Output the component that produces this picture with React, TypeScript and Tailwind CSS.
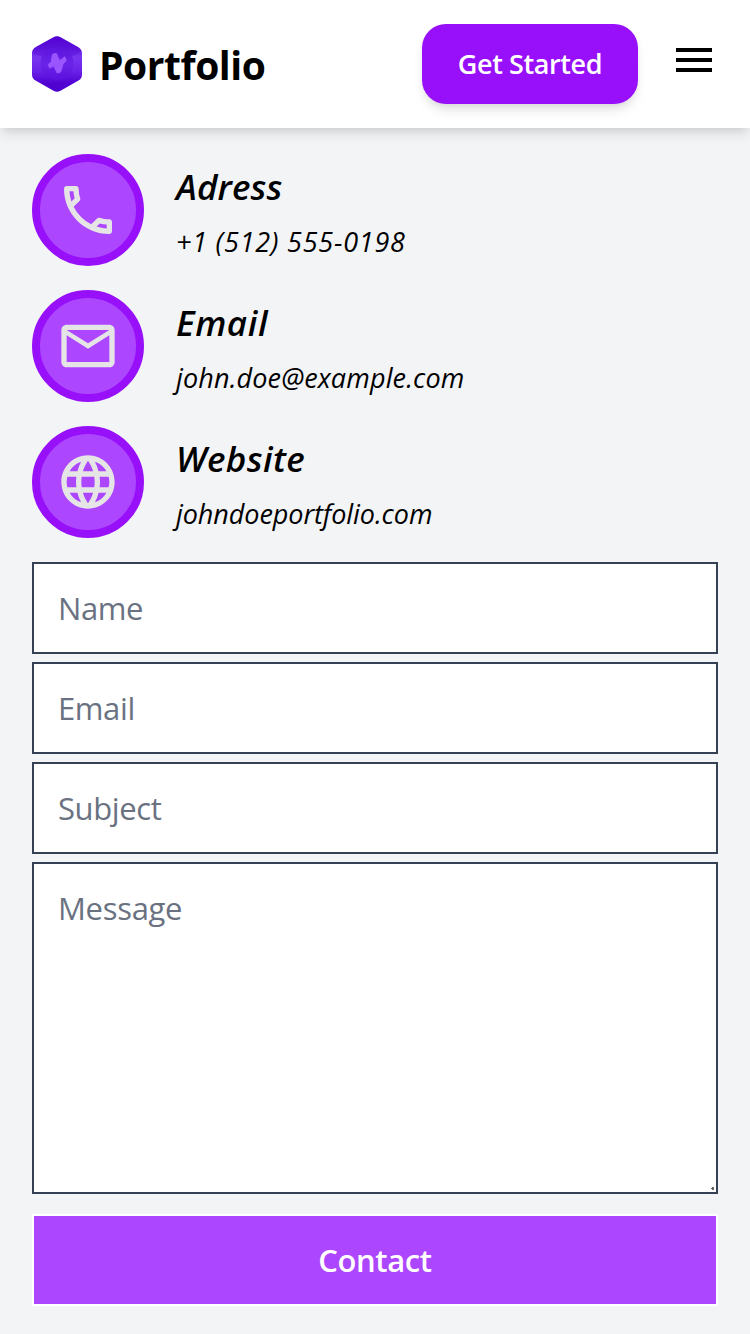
import { MdLanguage, MdMailOutline, MdMenu, MdOutlinePhone } from "react-icons/md";

const contacts = [
  { title: "Adress", value: "+1 (512) 555-0198", Icon: MdOutlinePhone, titleClass: "tracking-[0.1px]", valueClass: "tracking-[0.75px]" },
  { title: "Email", value: "john.doe@example.com", Icon: MdMailOutline, titleClass: "tracking-[0.6px]", valueClass: "tracking-[0.13px]" },
  { title: "Website", value: "johndoeportfolio.com", Icon: MdLanguage, titleClass: "tracking-[0.4px]", valueClass: "tracking-[-0.08px]" },
];

const fields = ["Name", "Email", "Subject"];

function Logo() {
  return (
    <svg width="50" height="56" viewBox="0 0 50 56" className="shrink-0">
      <defs>
        <linearGradient id="hex" x1="0" y1="0" x2="0" y2="1">
          <stop offset="0" stopColor="#5300d4" />
          <stop offset="0.2" stopColor="#6018de" />
          <stop offset="0.38" stopColor="#7835f0" />
          <stop offset="0.62" stopColor="#6c22e9" />
          <stop offset="0.85" stopColor="#5002d2" />
          <stop offset="1" stopColor="#4d00cc" />
        </linearGradient>
        <linearGradient id="disc" x1="0" y1="0" x2="0" y2="1">
          <stop offset="0" stopColor="#5c12dc" />
          <stop offset="0.5" stopColor="#6a24e8" />
          <stop offset="1" stopColor="#5c10dd" />
        </linearGradient>
      </defs>
      <path d="M21.5 1.2Q25 -.8 28.5 1.2L46 11Q50 13.200 50 17.500V38.500Q50 42.500 46.500 44.500L28.500 54.800Q25 56.800 21.500 54.800L3.500 44.500Q0 42.500 0 38.500V17.500Q0 13.200 3.800 11Z" fill="url(#hex)" />
      <path d="M0 17Q0 13 3.800 11L21.500 1.200Q25 -.8 28.500 1.200L46 11Q49 12.800 49.700 15.500L39 21Q25 7 11 21Z" fill="#5200d2" opacity=".3" />
      <circle cx="25" cy="27.500" r="16.500" fill="url(#disc)" />
      <path d="M16.300 28.500L19.300 26L20.200 19.500Q20.500 18 22 17.800L24.500 17.500L27.300 24.500L29.500 23.500L32.800 20.800L34.200 24.500L31 28L29 35Q28.700 36.500 27 36.600L25 36.800L21.800 29.800L17.800 32.200Z" fill="#9b55ff" stroke="#9b55ff" strokeWidth="1" strokeLinejoin="round" />
    </svg>
  );
}

export default function App() {
  return (
    <div className="flex min-h-[1334px] flex-col bg-gray-100 font-['Open_Sans','Noto_Sans',sans-serif] text-black">
      <header className="relative flex h-32 items-center justify-between bg-white px-8 shadow-[0_8px_12px_-2px_rgba(0,0,0,0.1),0_4px_8px_-4px_rgba(0,0,0,0.1)]">
        <div className="flex items-center gap-[17px]">
          <Logo />
          <span className="pt-[2px] text-[39px] leading-[56px] font-bold tracking-[-0.45px]">Portfolio</span>
        </div>
        <div className="flex items-center gap-8">
          <button className="h-20 w-[216px] rounded-3xl bg-[#9810fa] text-[27px] font-semibold tracking-[-0.4px] text-white shadow-[0_8px_12px_-2px_rgba(0,0,0,0.1),0_4px_8px_-4px_rgba(0,0,0,0.1)]">
            Get Started
          </button>
          <MdMenu className="mb-2 size-12" />
        </div>
      </header>

      <main className="flex flex-col px-8 pt-[26px]">
        <div className="flex flex-col gap-6">
          {contacts.map(({ title, value, Icon, titleClass, valueClass }) => (
            <div key={title} className="flex h-28 items-center gap-8">
              <div className="flex size-28 items-center justify-center rounded-full border-8 border-[#9810fa] bg-[#ad46ff] text-[#e5e5e5]">
                <Icon className="size-16" />
              </div>
              <div className="flex flex-col gap-[3px] pt-[5px] italic">
                <h2 className={`text-[35px] leading-[56px] font-semibold ${titleClass}`}>{title}</h2>
                <p className={`text-[27px] leading-[48px] ${valueClass}`}>{value}</p>
              </div>
            </div>
          ))}
        </div>

        <form className="mt-6 flex flex-col">
          <div className="flex flex-col gap-2">
            {fields.map((field) => (
              <input
                key={field}
                placeholder={field}
                className="h-[92px] border-2 border-[#364153] bg-white px-6 text-[31px] tracking-[-0.4px] placeholder:text-[#6a7282]"
              />
            ))}
            <div className="relative flex">
              <textarea
                placeholder="Message"
                className="h-[332px] w-full resize-none border-2 border-[#364153] bg-white px-6 py-5 text-[31px] leading-[48px] tracking-[-0.3px] placeholder:text-[#6a7282]"
              />
              <svg width="4" height="4" viewBox="0 0 4 4" className="pointer-events-none absolute right-[3px] bottom-[3px]">
                <path d="M0 2V1H1V0H3V3H1V2Z" fill="#666" />
              </svg>
            </div>
          </div>
          <button className="mt-5 h-[92px] border-2 border-white bg-[#ad46ff] text-[31px] font-semibold tracking-[-0.4px] text-white">
            Contact
          </button>
        </form>
      </main>
    </div>
  );
}
